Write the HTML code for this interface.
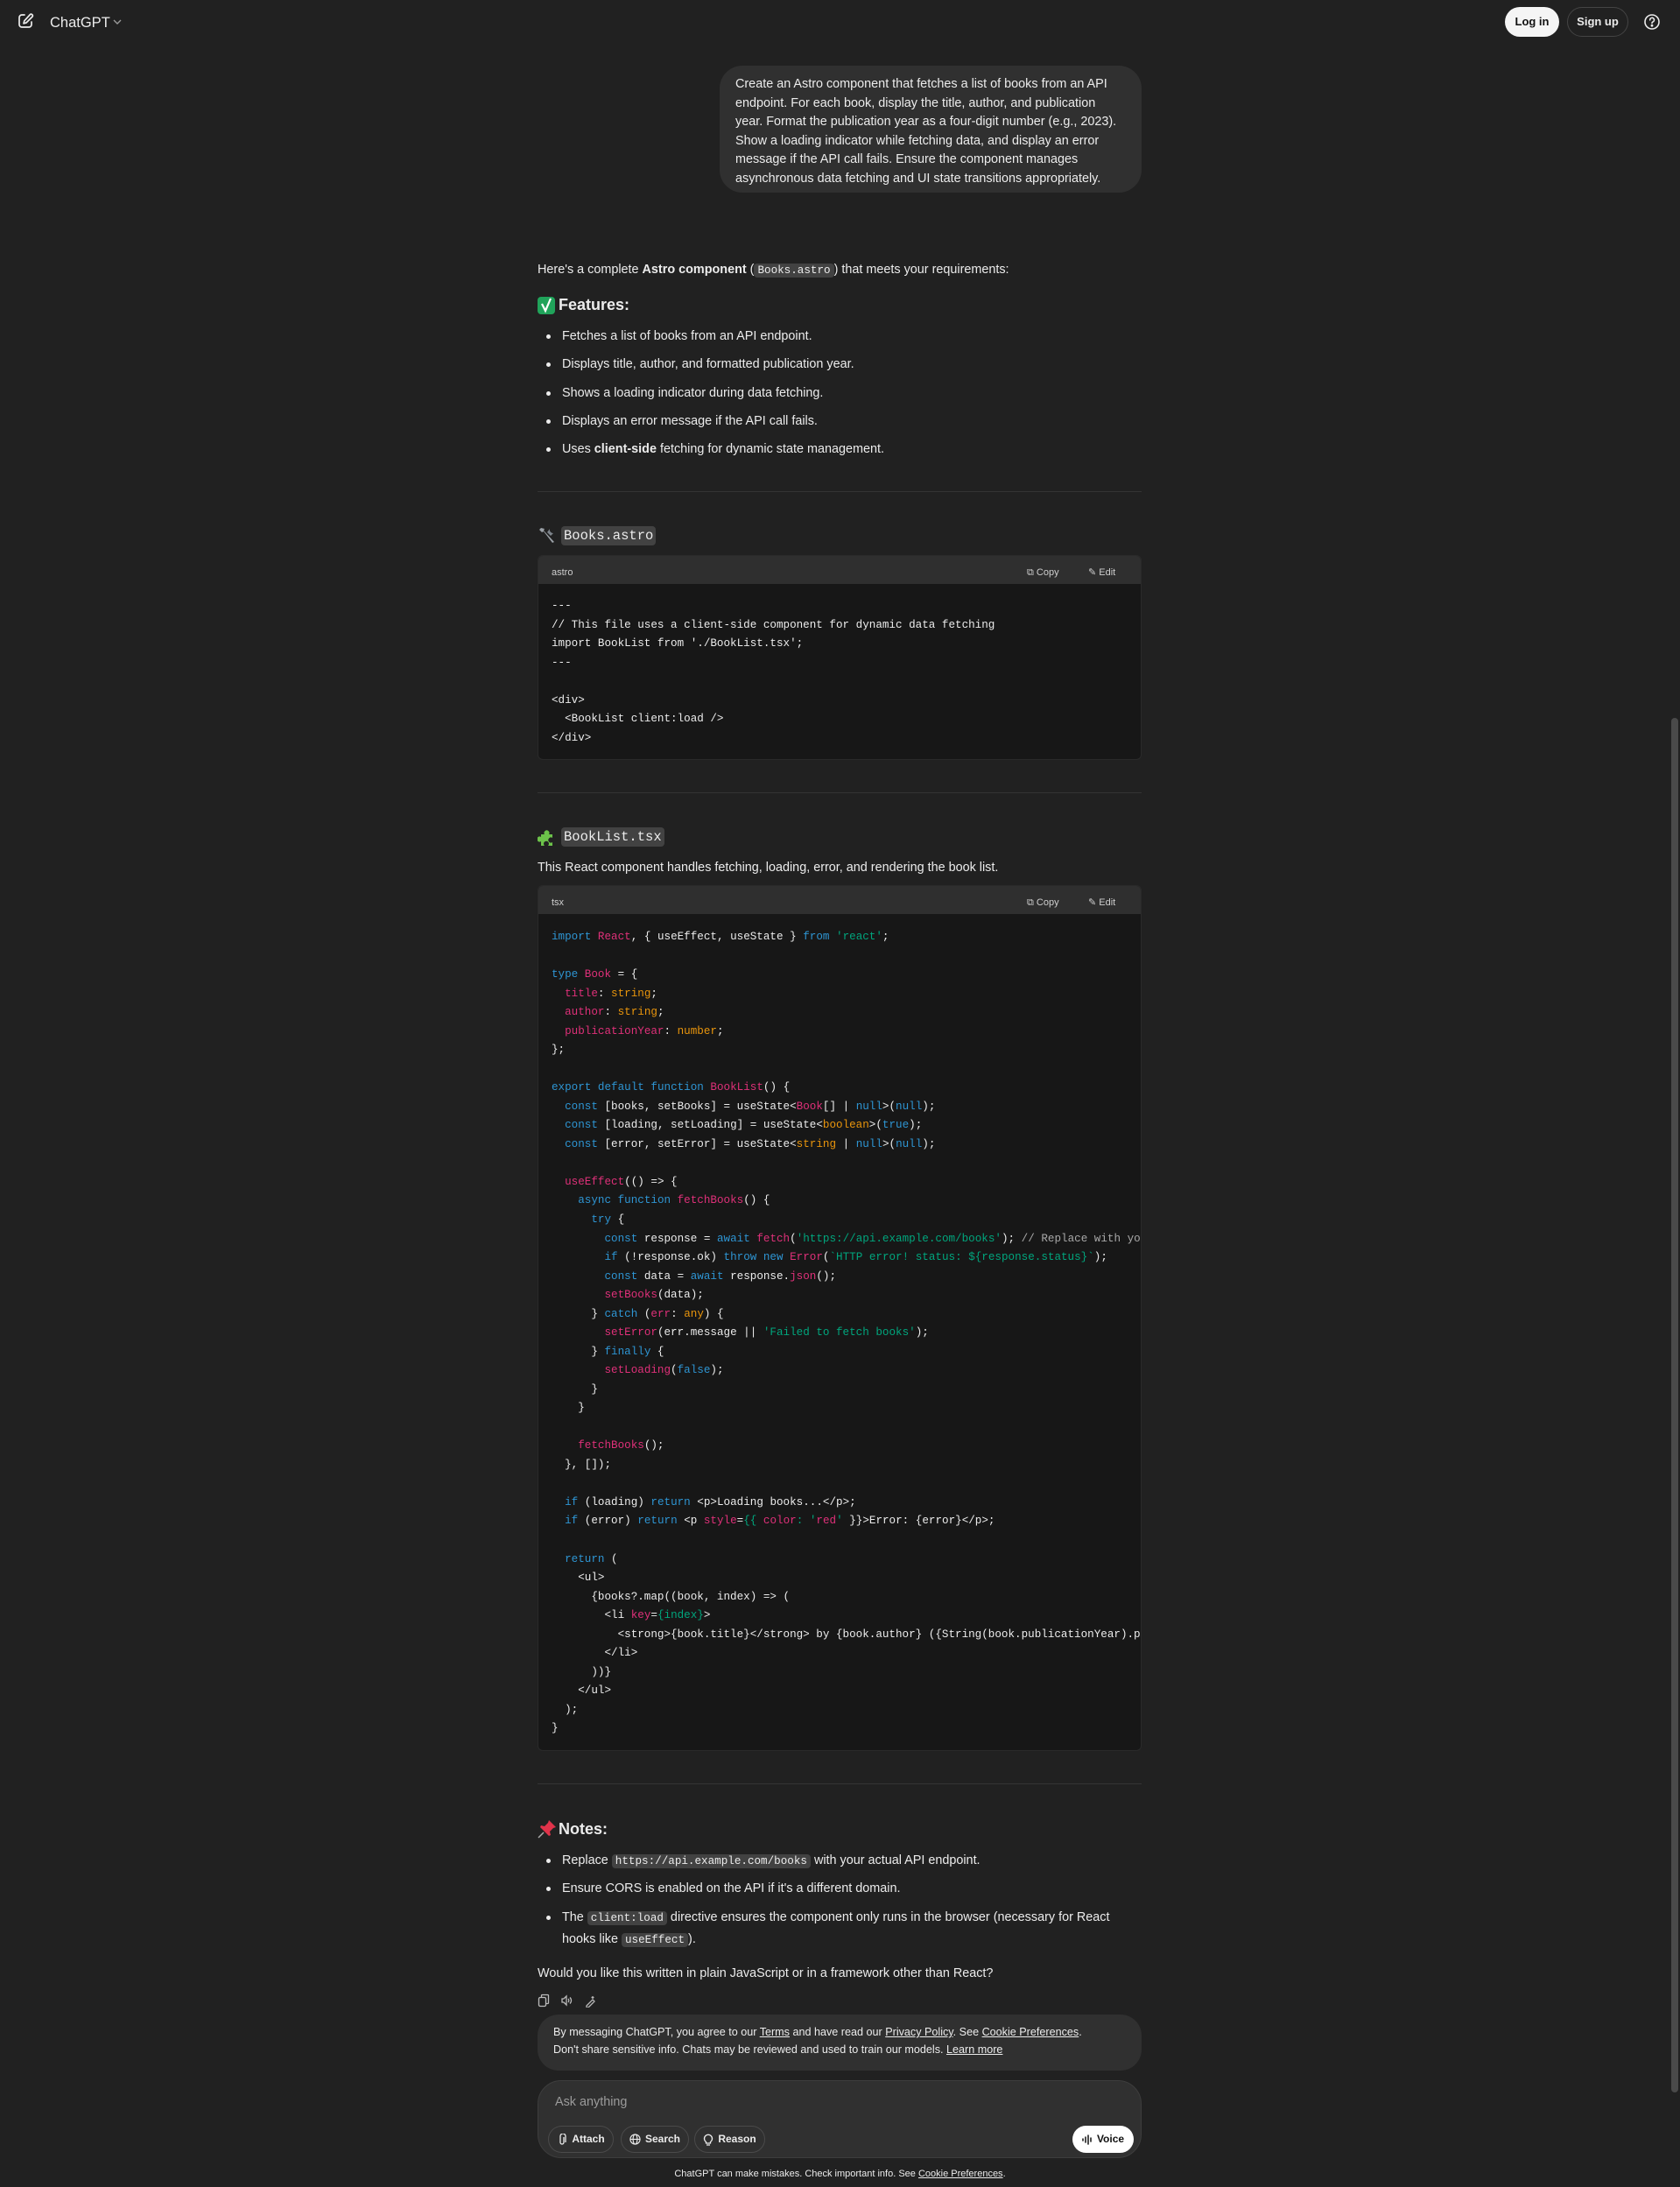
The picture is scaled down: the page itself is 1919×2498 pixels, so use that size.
<!DOCTYPE html>
<html><head><meta charset="utf-8">
<style>
*{margin:0;padding:0;box-sizing:border-box}
html,body{width:1919px;height:2498px;background:#212121;overflow:hidden}
body{position:relative;font-family:"Liberation Sans",sans-serif;color:#ececec;font-size:14.4px;line-height:21.6px}
.a{position:absolute}
.ln{position:absolute;left:614px;white-space:nowrap}
code,.m{font-family:"Liberation Mono",monospace}
.ic{background:#424242;border-radius:4px;padding:1px 4px;font-size:12.6px}
.li{position:absolute;left:642px;white-space:nowrap}
.li:before{content:"";position:absolute;left:-18px;top:8px;width:5px;height:5px;border-radius:50%;background:#ececec}
.hr{position:absolute;left:614px;width:690px;height:1px;background:#343434}
.h3{font-size:18px;font-weight:bold}
.cb{position:absolute;left:614px;width:690px;background:#171717;border:1px solid #2a2a2a;border-radius:6px;overflow:hidden}
.cbh{height:32px;background:#2f2f2f;font-size:11px;color:#cfcfcf;position:relative}
.cbh .lang{position:absolute;left:15px;top:9px}
.cbh .cp{position:absolute;left:558px;top:9px}
.cbh .ed{position:absolute;left:628px;top:9px}
pre{font-family:"Liberation Mono",monospace;font-size:12.6px;line-height:21.53px;color:#ececec;padding-left:15px;white-space:pre}
.k{color:#2e95d3}.r{color:#df3079}.s{color:#00a67d}.t{color:#e9950c}.c{color:#a8a8a8}
.btn{position:absolute;top:2428px;height:31px;border:1px solid #4a4a4a;border-radius:16px;font-size:12px;font-weight:bold;color:#ececec;display:flex;align-items:center;justify-content:center;gap:5px}
u{text-decoration:underline}
</style></head><body>

<svg class="a" style="left:19px;top:14px" width="20" height="20" viewBox="0 0 20 20" fill="none" stroke="#ececec" stroke-width="1.7" stroke-linecap="round" stroke-linejoin="round"><path d="M9 3H6a3 3 0 0 0-3 3v8a3 3 0 0 0 3 3h8a3 3 0 0 0 3-3v-3"/><path d="M15.5 2.5a1.8 1.8 0 0 1 2.5 2.5L11 12l-3 .8.8-3z"/></svg>
<div class="a" style="left:57px;top:15px;font-size:16.5px;line-height:22px;color:#ececec">ChatGPT</div>
<svg class="a" style="left:129px;top:21px" width="10" height="8" viewBox="0 0 10 8" fill="none" stroke="#9a9a9a" stroke-width="1.4"><path d="M1 2l4 4 4-4"/></svg>
<div class="a" style="left:1719px;top:8px;width:62px;height:34px;border-radius:17px;background:#f5f5f5;color:#111;font-size:13px;font-weight:bold;text-align:center;line-height:34px">Log in</div>
<div class="a" style="left:1790px;top:8px;width:70px;height:34px;border-radius:17px;border:1px solid #444;color:#ececec;font-size:13px;font-weight:bold;text-align:center;line-height:32px">Sign up</div>
<svg class="a" style="left:1877px;top:15px" width="20" height="20" viewBox="0 0 20 20" fill="none" stroke="#ececec" stroke-width="1.6"><circle cx="10" cy="10" r="8"/><path d="M7.7 7.8a2.4 2.4 0 1 1 3.2 2.2c-.6.3-.9.7-.9 1.4" stroke-linecap="round"/><circle cx="10" cy="14.2" r=".6" fill="#ececec"/></svg>

<div class="a" style="left:822px;top:75px;width:482px;height:145px;background:#303030;border-radius:26px;padding:11px 18px;white-space:nowrap">Create an Astro component that fetches a list of books from an API<br>endpoint. For each book, display the title, author, and publication<br>year. Format the publication year as a four-digit number (e.g., 2023).<br>Show a loading indicator while fetching data, and display an error<br>message if the API call fails. Ensure the component manages<br>asynchronous data fetching and UI state transitions appropriately.</div>

<div class="ln" style="top:298px">Here's a complete <b>Astro component</b> (<code class="ic">Books.astro</code>) that meets your requirements:</div>
<svg class="a" style="left:614px;top:338px" width="20" height="21" viewBox="0 0 20 21"><rect x="0" y="1" width="20" height="20" rx="4" fill="#20a35a"/><path d="M5 9l4 8 6-14" fill="none" stroke="#fff" stroke-width="2.2"/></svg>
<div class="ln h3" style="left:638px;top:338px">Features:</div>
<div class="li" style="top:374px">Fetches a list of books from an API endpoint.</div>
<div class="li" style="top:406px">Displays title, author, and formatted publication year.</div>
<div class="li" style="top:439px">Shows a loading indicator during data fetching.</div>
<div class="li" style="top:471px">Displays an error message if the API call fails.</div>
<div class="li" style="top:503px">Uses <b>client-side</b> fetching for dynamic state management.</div>
<div class="hr" style="top:561px"></div>

<svg class="a" style="left:614px;top:601px" width="22" height="22" viewBox="0 0 22 22"><path d="M4 2l-2 2 3 3 2-1 10 13 2-1-12-13 1-2z" fill="#9aa0a6"/><path d="M14 3a4 4 0 0 0 4 5l-3 3-4-4 3-4z" fill="#7d848b"/></svg>
<div class="a m" style="left:641px;top:601px;height:22px;padding:0 3px;background:#424242;border-radius:4px;font-size:15.5px;line-height:22px">Books.astro</div>

<div class="cb" style="top:634px;height:234px">
<div class="cbh"><span class="lang">astro</span><span class="cp">⧉ Copy</span><span class="ed">✎ Edit</span></div>
<pre style="padding-top:15px">---
// This file uses a client-side component for dynamic data fetching
import BookList from './BookList.tsx';
---

&lt;div&gt;
  &lt;BookList client:load /&gt;
&lt;/div&gt;</pre>
</div>
<div class="hr" style="top:905px"></div>

<svg class="a" style="left:614px;top:945px" width="22" height="22" viewBox="0 0 22 22"><path d="M4 8h4a3 3 0 1 1 5 0h4v4a3 3 0 1 0 0 5v4h-5a3 3 0 1 0-4 0H4v-5a3 3 0 1 1 0-5z" fill="#6cc24a"/></svg>
<div class="a m" style="left:641px;top:945px;height:22px;padding:0 3px;background:#424242;border-radius:4px;font-size:15.5px;line-height:22px">BookList.tsx</div>
<div class="ln" style="top:981px">This React component handles fetching, loading, error, and rendering the book list.</div>

<div class="cb" style="top:1011px;height:989px">
<div class="cbh"><span class="lang">tsx</span><span class="cp">⧉ Copy</span><span class="ed">✎ Edit</span></div>
<pre style="padding-top:16px"><span class="k">import</span> <span class="r">React</span>, { useEffect, useState } <span class="k">from</span> <span class="s">'react'</span>;

<span class="k">type</span> <span class="r">Book</span> = {
  <span class="r">title</span>: <span class="t">string</span>;
  <span class="r">author</span>: <span class="t">string</span>;
  <span class="r">publicationYear</span>: <span class="t">number</span>;
};

<span class="k">export</span> <span class="k">default</span> <span class="k">function</span> <span class="r">BookList</span>() {
  <span class="k">const</span> [books, setBooks] = useState&lt;<span class="r">Book</span>[] | <span class="k">null</span>&gt;(<span class="k">null</span>);
  <span class="k">const</span> [loading, setLoading] = useState&lt;<span class="t">boolean</span>&gt;(<span class="k">true</span>);
  <span class="k">const</span> [error, setError] = useState&lt;<span class="t">string</span> | <span class="k">null</span>&gt;(<span class="k">null</span>);

  <span class="r">useEffect</span>(() =&gt; {
    <span class="k">async</span> <span class="k">function</span> <span class="r">fetchBooks</span>() {
      <span class="k">try</span> {
        <span class="k">const</span> response = <span class="k">await</span> <span class="r">fetch</span>(<span class="s">'https://api.example.com/books'</span>); <span class="c">// Replace with your actual API endpoint</span>
        <span class="k">if</span> (!response.ok) <span class="k">throw</span> <span class="k">new</span> <span class="r">Error</span>(<span class="s">`HTTP error! status: ${response.status}`</span>);
        <span class="k">const</span> data = <span class="k">await</span> response.<span class="r">json</span>();
        <span class="r">setBooks</span>(data);
      } <span class="k">catch</span> (<span class="r">err</span>: <span class="t">any</span>) {
        <span class="r">setError</span>(err.message || <span class="s">'Failed to fetch books'</span>);
      } <span class="k">finally</span> {
        <span class="r">setLoading</span>(<span class="k">false</span>);
      }
    }

    <span class="r">fetchBooks</span>();
  }, []);

  <span class="k">if</span> (loading) <span class="k">return</span> &lt;p&gt;Loading books...&lt;/p&gt;;
  <span class="k">if</span> (error) <span class="k">return</span> &lt;p <span class="r">style</span>=<span class="s">{{</span> <span class="r">color</span><span class="s">:</span> <span class="s">'</span><span class="r">red</span><span class="s">'</span> }}&gt;Error: {error}&lt;/p&gt;;

  <span class="k">return</span> (
    &lt;ul&gt;
      {books?.map((book, index) =&gt; (
        &lt;li <span class="r">key</span>=<span class="s">{index}</span>&gt;
          &lt;strong&gt;{book.title}&lt;/strong&gt; by {book.author} ({String(book.publicationYear).padStart(4, '0')})
        &lt;/li&gt;
      ))}
    &lt;/ul&gt;
  );
}</pre>
</div>
<div class="hr" style="top:2037px"></div>

<svg class="a" style="left:614px;top:2078px" width="22" height="22" viewBox="0 0 22 22"><path d="M13 1l8 8-3 1-4 4 1 4-2 1-10-10 1-2 4 1 4-4z" fill="#e0334a"/><path d="M7 15l-6 6" stroke="#aaa" stroke-width="1.5"/></svg>
<div class="ln h3" style="left:638px;top:2079px">Notes:</div>
<div class="li" style="top:2115px">Replace <code class="ic">https://api.example.com/books</code> with your actual API endpoint.</div>
<div class="li" style="top:2147px">Ensure CORS is enabled on the API if it's a different domain.</div>
<div class="li" style="top:2180px">The <code class="ic">client:load</code> directive ensures the component only runs in the browser (necessary for React</div>
<div class="ln" style="left:642px;top:2205px">hooks like <code class="ic">useEffect</code>).</div>
<div class="ln" style="top:2244px">Would you like this written in plain JavaScript or in a framework other than React?</div>

<svg class="a" style="left:614px;top:2277px" width="80" height="16" viewBox="0 0 80 16" fill="none" stroke="#bbb" stroke-width="1.3"><rect x="1.5" y="4.5" width="8" height="10" rx="1.5"/><path d="M4.5 4.5V2.5a1 1 0 0 1 1-1h6a1 1 0 0 1 1 1v8a1 1 0 0 1-1 1h-2"/><path d="M28 6h2l3-3v10l-3-3h-2z"/><path d="M35 6c1 1 1 3 0 4M37 4.5c2 2 2 5 0 7"/><path d="M56 14l7-7 2 2-7 7h-2zM63 3v3M61.5 4.5h3"/></svg>

<div class="a" style="left:614px;top:2301px;width:690px;height:64px;background:#303030;border-radius:24px;padding:10px 18px 0 18px;font-size:12.6px;line-height:20px;white-space:nowrap">By messaging ChatGPT, you agree to our <u>Terms</u> and have read our <u>Privacy Policy</u>. See <u>Cookie Preferences</u>.<br>Don't share sensitive info. Chats may be reviewed and used to train our models. <u>Learn more</u></div>

<div class="a" style="left:614px;top:2376px;width:690px;height:89px;background:#303030;border:1px solid #3d3d3d;border-radius:27px"></div>
<div class="a" style="left:634px;top:2391px;font-size:14.4px;color:#9b9b9b">Ask anything</div>
<div class="btn" style="left:626px;width:75px"><svg width="12" height="14" viewBox="0 0 12 14" fill="none" stroke="#ececec" stroke-width="1.3"><path d="M8 4v6a2 2 0 0 1-4 0V3a3 3 0 0 1 6 0v7"/></svg>Attach</div>
<div class="btn" style="left:709px;width:78px"><svg width="13" height="13" viewBox="0 0 14 14" fill="none" stroke="#ececec" stroke-width="1.2"><circle cx="7" cy="7" r="6"/><ellipse cx="7" cy="7" rx="2.6" ry="6"/><path d="M1 7h12"/></svg>Search</div>
<div class="btn" style="left:793px;width:81px"><svg width="12" height="14" viewBox="0 0 12 14" fill="none" stroke="#ececec" stroke-width="1.3"><path d="M3.5 9.5a4.5 4.5 0 1 1 5 0V11h-5z M4 13h4"/></svg>Reason</div>
<div class="a" style="left:1225px;top:2428px;width:70px;height:31px;border-radius:16px;background:#fff;color:#111;font-size:12px;font-weight:bold;display:flex;align-items:center;justify-content:center;gap:5px"><svg width="12" height="12" viewBox="0 0 12 12" stroke="#111" stroke-width="1.5" stroke-linecap="round"><path d="M1 5v2M4 3v6M7 1v10M10 4v4"/></svg>Voice</div>

<div class="a" style="left:0;width:1919px;top:2475px;text-align:center;font-size:11px;line-height:16px;color:#ececec">ChatGPT can make mistakes. Check important info. See <u>Cookie Preferences</u>.</div>

<div class="a" style="left:1909px;top:820px;width:8px;height:1570px;border-radius:4px;background:#4a4a4a"></div>
</body></html>
